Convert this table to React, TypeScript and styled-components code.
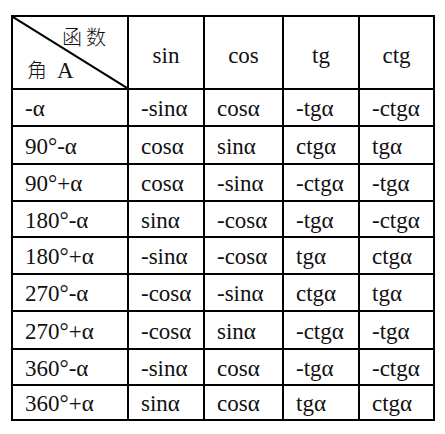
import styled, { createGlobalStyle } from 'styled-components';

const GlobalStyle = createGlobalStyle`
  html, body {
    margin: 0;
    padding: 0;
    background: #fff;
  }
`;

const serif = `'Liberation Serif', 'Times New Roman', serif`;

const Page = styled.div`
  padding: 15px 0 0 11px;
  font-family: ${serif};
  color: #111;
`;

const Table = styled.table`
  border-collapse: collapse;
  table-layout: fixed;
  width: 422px;
  font-family: ${serif};
  font-size: 23px;
  color: #111;
`;

const Cell = styled.td<{ $head?: boolean }>`
  border: 2px solid #000;
  padding: ${(p) => (p.$head ? '6px 0 0' : '3px 0 0 12px')};
  text-align: ${(p) => (p.$head ? 'center' : 'left')};
  vertical-align: middle;
  white-space: nowrap;
  line-height: 1.1;
  font-family: ${serif};
`;

const Row = styled.tr<{ $h: number }>`
  height: ${(p) => p.$h}px;
`;

const CornerCell = styled.td`
  border: 2px solid #000;
  padding: 0;
  position: relative;
`;

const Corner = styled.div`
  display: flex;
  flex-direction: column;
  justify-content: space-between;
  height: 71px;
  padding: 5px 0 4px;
  box-sizing: border-box;
`;

const Cjk = styled.span`
  font-family: 'Noto Sans CJK SC', sans-serif;
  font-size: 20px;
  font-weight: 300;
`;

const CornerTop = styled(Cjk)`
  align-self: flex-end;
  padding-right: 17px;
  letter-spacing: 4px;
`;

const CornerBottom = styled.div`
  padding-left: 14px;
  display: flex;
  align-items: baseline;
  gap: 10px;
`;

const Latin = styled.span`
  font-family: ${serif};
`;

const Slash = styled.svg`
  position: absolute;
  inset: 0;
  width: 100%;
  height: 100%;
  pointer-events: none;
`;

const heads = ['sin', 'cos', 'tg', 'ctg'];

const rows: { a: string; v: string[]; h: number }[] = [
  { a: '-α', v: ['-sinα', 'cosα', '-tgα', '-ctgα'], h: 37 },
  { a: '90°-α', v: ['cosα', 'sinα', 'ctgα', 'tgα'], h: 38 },
  { a: '90°+α', v: ['cosα', '-sinα', '-ctgα', '-tgα'], h: 37 },
  { a: '180°-α', v: ['sinα', '-cosα', '-tgα', '-ctgα'], h: 36 },
  { a: '180°+α', v: ['-sinα', '-cosα', 'tgα', 'ctgα'], h: 37 },
  { a: '270°-α', v: ['-cosα', '-sinα', 'ctgα', 'tgα'], h: 37 },
  { a: '270°+α', v: ['-cosα', 'sinα', '-ctgα', '-tgα'], h: 38 },
  { a: '360°-α', v: ['-sinα', 'cosα', '-tgα', '-ctgα'], h: 36 },
  { a: '360°+α', v: ['sinα', 'cosα', 'tgα', 'ctgα'], h: 35 },
];

export default function App() {
  return (
    <Page>
      <GlobalStyle />
      <Table>
        <colgroup>
          <col style={{ width: 116 }} />
          <col style={{ width: 76 }} />
          <col style={{ width: 79 }} />
          <col style={{ width: 76 }} />
          <col style={{ width: 75 }} />
        </colgroup>
        <tbody>
          <Row $h={73}>
            <CornerCell>
              <Slash viewBox="0 0 100 100" preserveAspectRatio="none">
                <line x1="0" y1="0" x2="100" y2="100" stroke="#000" strokeWidth="2" vectorEffect="non-scaling-stroke" />
              </Slash>
              <Corner>
                <CornerTop>函数</CornerTop>
                <CornerBottom>
                  <Cjk>角</Cjk>
                  <Latin>A</Latin>
                </CornerBottom>
              </Corner>
            </CornerCell>
            {heads.map((h) => (
              <Cell key={h} $head>
                {h}
              </Cell>
            ))}
          </Row>
          {rows.map((r) => (
            <Row key={r.a} $h={r.h}>
              <Cell>{r.a}</Cell>
              {r.v.map((v, i) => (
                <Cell key={i}>{v}</Cell>
              ))}
            </Row>
          ))}
        </tbody>
      </Table>
    </Page>
  );
}
